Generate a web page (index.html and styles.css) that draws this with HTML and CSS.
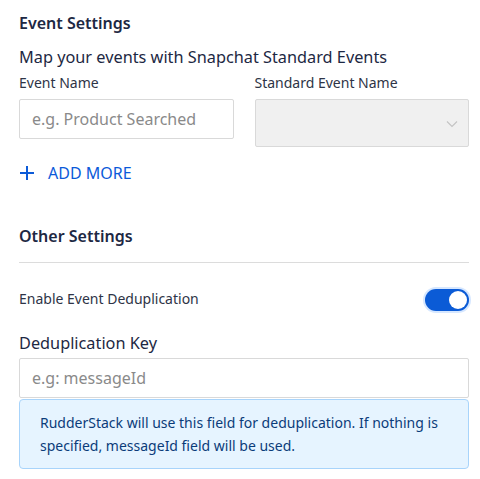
FILE: index.html
```html
<!DOCTYPE html>
<html>
<head>
<meta charset="utf-8">
<link rel="stylesheet" href="styles.css">
</head>
<body>
<div class="page">
  <div class="title">Event Settings</div>
  <div class="subtitle">Map your events with Snapchat Standard Events</div>
  <div class="map-row">
    <div class="col">
      <div class="label">Event Name</div>
      <div class="input input-small"><span class="ph">e.g. Product Searched</span></div>
    </div>
    <div class="col">
      <div class="label">Standard Event Name</div>
      <div class="select">
        <svg class="chev" width="12" height="8" viewBox="0 0 12 8"><path d="M1 1.5 L6 6.5 L11 1.5" fill="none" stroke="#c4c4c4" stroke-width="1.2"/></svg>
      </div>
    </div>
  </div>
  <div class="add-more">
    <svg width="16" height="16" viewBox="0 0 16 16"><path d="M8 1 V15 M1 8 H15" stroke="#0d5bd8" stroke-width="2"/></svg>
    <span>ADD MORE</span>
  </div>
  <div class="section-title">Other Settings</div>
  <div class="toggle-row">
    <span class="toggle-label">Enable Event Deduplication</span>
    <span class="toggle"><span class="knob"></span></span>
  </div>
  <div class="field-title">Deduplication Key</div>
  <div class="input input-wide"><span class="ph">e.g: messageId</span></div>
  <div class="info">RudderStack will use this field for deduplication. If nothing is specified, messageId field will be used.</div>
</div>
</body>
</html>
```
FILE: styles.css
```css
* { box-sizing: border-box; }
body {
  margin: 0;
  background: #fff;
  font-family: "Noto Sans", "Open Sans", sans-serif;
}
.page {
  padding: 11px 11px 0 19px;
  width: 480px;
}
.title {
  font-size: 16px;
  font-weight: 600;
  line-height: 24px;
  color: #1d2843;
}
.subtitle {
  margin-top: 10px;
  font-size: 16.3px;
  font-weight: 400;
  line-height: 24px;
  color: #1d2843;
}
.map-row {
  display: flex;
  gap: 21px;
  margin-top: 3px;
}
.col { width: 215px; }
.label {
  font-size: 14px;
  line-height: 22px;
  color: #2e3446;
}
.input {
  margin-top: 5px;
  height: 40px;
  border: 1px solid #d9d9d9;
  border-radius: 2px;
  display: flex;
  align-items: center;
  padding-left: 12px;
  background: #fff;
}
.ph {
  font-size: 16px;
  color: #8a8a8a;
}
.select {
  margin-top: 5px;
  height: 48px;
  border: 1px solid #d9d9d9;
  border-radius: 2px;
  background: #f0f0f0;
  display: flex;
  align-items: center;
  justify-content: flex-end;
  padding-right: 10px;
}
.chev { margin-top: 1px; }
.add-more {
  margin-top: 14px;
  display: flex;
  align-items: center;
  gap: 13px;
  height: 24px;
  color: #0b5ad9;
  font-size: 16px;
  line-height: 24px;
}
.section-title {
  margin-top: 39px;
  font-size: 16px;
  font-weight: 600;
  line-height: 24px;
  color: #1d2843;
  padding-bottom: 14px;
  border-bottom: 1px solid #dcdcdc;
}
.toggle-row {
  margin-top: 26px;
  display: flex;
  justify-content: space-between;
  align-items: center;
  height: 22px;
}
.toggle-label {
  font-size: 14px;
  color: #2e3446;
  margin-top: -3px;
}
.toggle {
  width: 44px;
  height: 22px;
  border-radius: 11px;
  background: #0b5bd6;
  box-shadow: 0 0 0 2px #d6e7ff;
  position: relative;
}
.knob {
  position: absolute;
  right: 2px;
  top: 2px;
  width: 18px;
  height: 18px;
  border-radius: 50%;
  background: #fff;
}
.field-title {
  margin-top: 20px;
  font-size: 16.3px;
  font-weight: 400;
  line-height: 24px;
  color: #1d2843;
}
.input-wide { margin-top: 3px; }
.info {
  margin-top: 1px;
  background: #e6f4ff;
  border: 1px solid #a8d4fb;
  border-radius: 4px;
  padding: 11px 20px 11px 20px;
  font-size: 14px;
  line-height: 23px;
  color: #0b3c7a;
}
```
